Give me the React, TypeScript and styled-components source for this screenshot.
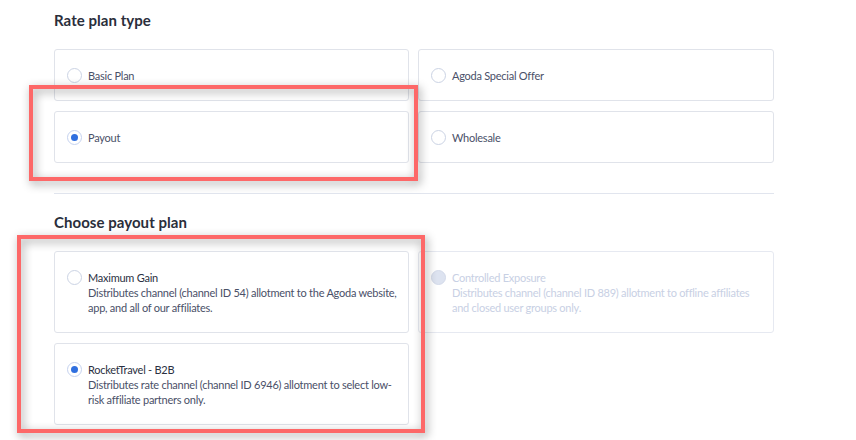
import React from "react";
import styled, { createGlobalStyle } from "styled-components";

const Global = createGlobalStyle`
  html, body { margin: 0; padding: 0; background: #fff; }
  body { font-family: Lato, "Open Sans", sans-serif; }
`;

const Page = styled.div`
  position: relative;
  width: 856px;
  height: 440px;
  overflow: hidden;
  background: #fff;
`;

const Content = styled.div`
  width: 720px;
  padding: 10px 0 0 54px;
`;

const Heading = styled.h2`
  margin: 0;
  font-size: 15px;
  line-height: 20px;
  font-weight: 700;
  color: #2a2e3b;
  letter-spacing: 0.05px;
`;

const Grid = styled.div`
  display: grid;
  grid-template-columns: 355px 356px;
  column-gap: 9px;
  row-gap: 10px;
  margin-top: 19px;
`;

const Card = styled.div<{ $tall?: boolean; $disabled?: boolean }>`
  box-sizing: border-box;
  height: ${(p) => (p.$tall ? 82 : 52)}px;
  border: 1px solid ${(p) => (p.$disabled ? "#e6e9f1" : "#e0e3ea")};
  border-radius: 3px;
  background: #fff;
  padding: 0 12px;
  display: flex;
  align-items: ${(p) => (p.$tall ? "flex-start" : "center")};
  padding-top: ${(p) => (p.$tall ? 18 : 0)}px;
  gap: 6px;
`;

const Radio = styled.span<{ $checked?: boolean; $disabled?: boolean }>`
  box-sizing: border-box;
  flex: none;
  width: 15px;
  height: 15px;
  border-radius: 50%;
  border: 1px solid
    ${(p) => (p.$disabled ? "#d3daea" : p.$checked ? "#c5d2ef" : "#cbd3e4")};
  background: ${(p) => (p.$disabled ? "#dde3f0" : "#fff")};
  display: flex;
  align-items: center;
  justify-content: center;
  &::after {
    content: "";
    display: ${(p) => (p.$checked ? "block" : "none")};
    width: 7px;
    height: 7px;
    border-radius: 50%;
    background: #2f6fdf;
  }
`;

const Label = styled.span`
  font-size: 11px;
  line-height: 15px;
  letter-spacing: -0.25px;
  color: #4a5068;
`;

const TextBlock = styled.div<{ $disabled?: boolean }>`
  font-size: 11px;
  line-height: 15px;
  letter-spacing: -0.25px;
  white-space: nowrap;
  color: ${(p) => (p.$disabled ? "#c8d0e4" : "#4a5068")};
`;

const Title = styled.div<{ $disabled?: boolean }>`
  color: ${(p) => (p.$disabled ? "#c8d0e4" : "#2b3042")};
`;

const Divider = styled.hr`
  margin: 30px 0 18px;
  border: 0;
  border-top: 1px solid #e1e5ee;
  width: 720px;
`;

const Highlight = styled.div<{ $l: number; $t: number; $w: number; $h: number }>`
  position: absolute;
  box-sizing: border-box;
  left: ${(p) => p.$l}px;
  top: ${(p) => p.$t}px;
  width: ${(p) => p.$w}px;
  height: ${(p) => p.$h}px;
  border: 4px solid #fd6868;
  filter: drop-shadow(2px 3px 5px rgba(0, 0, 0, 0.4));
  pointer-events: none;
`;

const types = [
  { label: "Basic Plan", checked: false },
  { label: "Agoda Special Offer", checked: false },
  { label: "Payout", checked: true },
  { label: "Wholesale", checked: false },
];

const payouts = [
  {
    title: "Maximum Gain",
    lines: [
      "Distributes channel (channel ID 54) allotment to the Agoda website,",
      "app, and all of our affiliates.",
    ],
    checked: false,
    disabled: false,
  },
  {
    title: "Controlled Exposure",
    lines: [
      "Distributes channel (channel ID 889) allotment to offline affiliates",
      "and closed user groups only.",
    ],
    checked: false,
    disabled: true,
  },
  {
    title: "RocketTravel - B2B",
    lines: [
      "Distributes rate channel (channel ID 6946) allotment to select low-",
      "risk affiliate partners only.",
    ],
    checked: true,
    disabled: false,
  },
];

export default function App() {
  return (
    <Page>
      <Global />
      <Content>
        <Heading>Rate plan type</Heading>
        <Grid>
          {types.map((t) => (
            <Card key={t.label}>
              <Radio $checked={t.checked} />
              <Label>{t.label}</Label>
            </Card>
          ))}
        </Grid>
        <Divider />
        <Heading>Choose payout plan</Heading>
        <Grid>
          {payouts.map((p) => (
            <Card key={p.title} $tall $disabled={p.disabled}>
              <Radio $checked={p.checked} $disabled={p.disabled} />
              <TextBlock $disabled={p.disabled}>
                <Title $disabled={p.disabled}>{p.title}</Title>
                {p.lines.map((l) => (
                  <div key={l}>{l}</div>
                ))}
              </TextBlock>
            </Card>
          ))}
        </Grid>
      </Content>
      <Highlight $l={29} $t={85} $w={389} $h={96} />
      <Highlight $l={17} $t={235} $w={408} $h={198} />
    </Page>
  );
}
